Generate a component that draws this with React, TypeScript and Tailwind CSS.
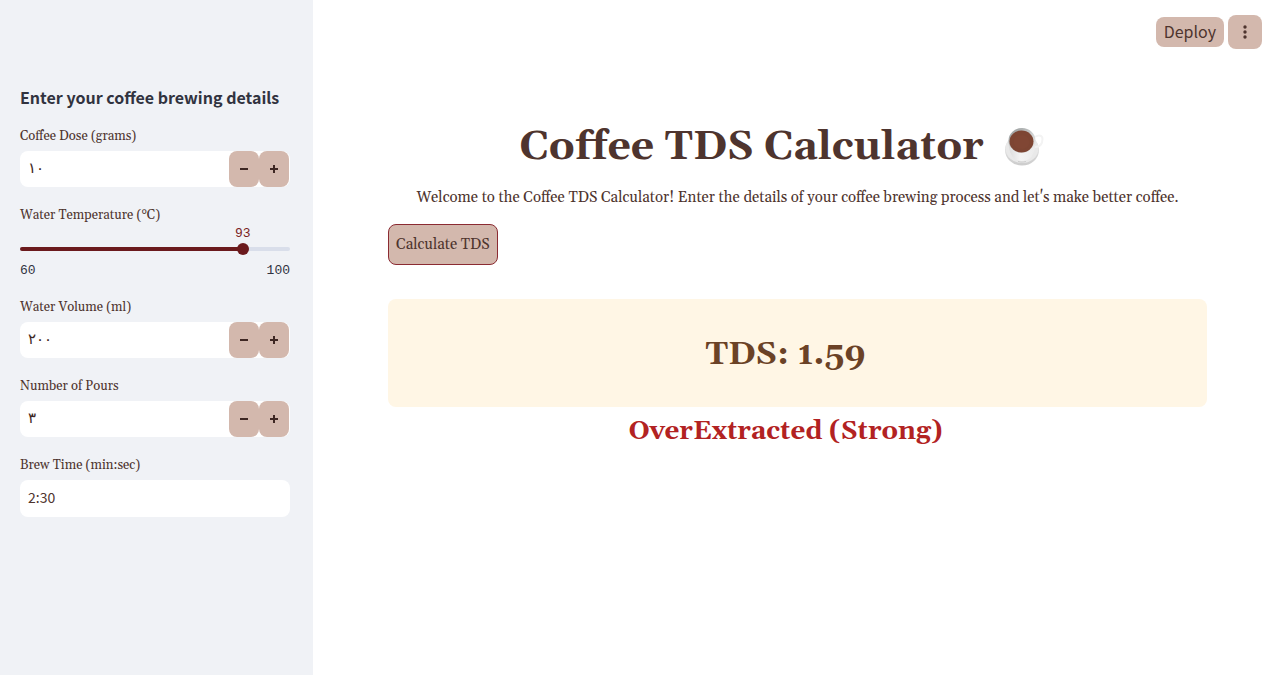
import { useState } from "react";
import type { ReactNode } from "react";

const serif = "font-[Georgia,Gelasio,'Liberation_Serif',serif]";
const sans = "font-['Source_Sans_Pro','Noto_Sans_CJK_SC','Noto_Sans',sans-serif]";
const mono = "font-['Liberation_Mono',monospace]";

function toArabic(value: number) {
  return value.toLocaleString("ar-EG", { useGrouping: false });
}

function Label({ htmlFor, children }: { htmlFor: string; children: ReactNode }) {
  return (
    <label htmlFor={htmlFor} className={`${serif} block text-[13px] leading-5 text-[#4e342e]`}>
      {children}
    </label>
  );
}

function Stepper({ id, label, initial, step }: { id: string; label: string; initial: number; step: number }) {
  const [value, setValue] = useState(initial);
  const button =
    "flex w-[30px] items-center justify-center rounded-lg bg-[#d3b8ad] text-[#3e2723]";
  return (
    <div className="flex flex-col gap-[5px]">
      <Label htmlFor={id}>{label}</Label>
      <div className="flex h-9 rounded-lg bg-white pr-px">
        <input
          id={id}
          type="text"
          inputMode="numeric"
          readOnly
          value={toArabic(value)}
          className="min-w-0 flex-1 rounded-l-lg bg-transparent px-2 pb-0.5 font-['DejaVu_Sans',sans-serif] text-[15px] text-[#3e2723] outline-none"
        />
        <button type="button" aria-label={`Decrease ${label}`} className={button} onClick={() => setValue(Math.max(0, value - step))}>
          <svg viewBox="0 0 8 8" className="size-2" fill="currentColor">
            <path d="M0 3h8v2H0z" />
          </svg>
        </button>
        <button type="button" aria-label={`Increase ${label}`} className={button} onClick={() => setValue(value + step)}>
          <svg viewBox="0 0 8 8" className="size-2" fill="currentColor">
            <path d="M3 0h2v3h3v2H5v3H3V5H0V3h3z" />
          </svg>
        </button>
      </div>
    </div>
  );
}

function TemperatureSlider() {
  const min = 60;
  const max = 100;
  const [value, setValue] = useState(93);
  const percent = ((value - min) / (max - min)) * 100;
  return (
    <div className="flex flex-col">
      <Label htmlFor="temperature">Water Temperature (°C)</Label>
      <div className={`${mono} relative h-[18px] text-[13px] leading-[18px] text-[#7b1e22]`}>
        <output htmlFor="temperature" className="absolute -translate-x-1/2" style={{ left: `${percent}%` }}>
          {value}
        </output>
      </div>
      <div className="relative flex h-3 items-center">
        <div className="h-1 w-full overflow-hidden rounded-full bg-[#d9deea]">
          <div className="h-full bg-[#6b1a1d]" style={{ width: `${percent}%` }} />
        </div>
        <input
          id="temperature"
          type="range"
          min={min}
          max={max}
          value={value}
          onChange={(e) => setValue(Number(e.target.value))}
          className="absolute inset-y-0 -left-1.5 w-[calc(100%+12px)] appearance-none bg-transparent [&::-webkit-slider-thumb]:size-3 [&::-webkit-slider-thumb]:appearance-none [&::-webkit-slider-thumb]:rounded-full [&::-webkit-slider-thumb]:bg-[#6b1a1d]"
        />
      </div>
      <div className={`${mono} flex justify-between pt-2 text-[13px] leading-4 text-[#31333f]`}>
        <span>{min}</span>
        <span>{max}</span>
      </div>
    </div>
  );
}

function CoffeeCup() {
  return (
    <svg viewBox="0 0 40 40" className="size-10" role="img" aria-label="Coffee">
      <defs>
        <linearGradient id="saucer" x1="0" y1="0" x2="0" y2="1">
          <stop offset="0" stopColor="#eeeeee" />
          <stop offset="1" stopColor="#cccccc" />
        </linearGradient>
        <linearGradient id="cup" x1="0" y1="0" x2="1" y2="0">
          <stop offset="0" stopColor="#dcdcdc" />
          <stop offset="0.45" stopColor="#f4f4f4" />
          <stop offset="1" stopColor="#ebebeb" />
        </linearGradient>
        <linearGradient id="rim" x1="0" y1="0" x2="1" y2="1">
          <stop offset="0" stopColor="#8f9494" />
          <stop offset="0.5" stopColor="#c8caca" />
          <stop offset="1" stopColor="#f4f4f4" />
        </linearGradient>
      </defs>
      <ellipse cx="18" cy="23" rx="17" ry="15.5" fill="url(#saucer)" />
      <ellipse cx="18" cy="21.500" rx="16.5" ry="14.5" fill="#e9e9e9" />
      <path d="M31 10c4-2.500 7.500-1.500 7.500 2 0 5-3 8-8 8" fill="none" stroke="#f3f3f3" strokeWidth="2" />
      <path d="M4.500 14c0 9 2.500 15 6.500 18 4 2.500 10 2.500 14 0 4-3 6.500-9 6.500-18z" fill="url(#cup)" />
      <path d="M14 34.500c3 .8 5 .8 8 0" stroke="#c4c4c4" strokeWidth="0.800" fill="none" />
      <ellipse cx="18" cy="13.500" rx="13.500" ry="12.500" fill="url(#rim)" />
      <ellipse cx="17.500" cy="14.500" rx="12" ry="11" fill="#7d4533" />
      <ellipse cx="17.500" cy="15" rx="8" ry="7" fill="#804634" />
    </svg>
  );
}

export default function App() {
  const [brewTime, setBrewTime] = useState("2:30");
  return (
    <div className="flex min-h-screen bg-white">
      <aside className="w-[313px] shrink-0 bg-[#f0f2f6] pt-[84px] pr-[23px] pl-5">
        <h2 className={`${sans} text-[16px] leading-[26px] font-bold whitespace-nowrap text-[#31333f]`}>
          Enter your coffee brewing details
        </h2>
        <form className="mt-4 flex flex-col gap-[18px]" onSubmit={(e) => e.preventDefault()}>
          <Stepper id="dose" label="Coffee Dose (grams)" initial={10} step={1} />
          <TemperatureSlider />
          <Stepper id="volume" label="Water Volume (ml)" initial={200} step={10} />
          <Stepper id="pours" label="Number of Pours" initial={3} step={1} />
          <div className="flex flex-col gap-[5px]">
            <Label htmlFor="brew-time">Brew Time (min:sec)</Label>
            <input
              id="brew-time"
              type="text"
              value={brewTime}
              onChange={(e) => setBrewTime(e.target.value)}
              className={`${sans} h-[37px] w-full rounded-lg bg-white px-2 pb-1 text-[14px] text-[#4e342e] outline-none`}
            />
          </div>
        </form>
      </aside>

      <div className="flex min-w-0 flex-1 flex-col">
        <header className="flex items-center justify-end gap-1 pt-[15px] pr-[18px]">
          <button type="button" className={`${sans} h-[30px] rounded-lg bg-[#d3b8ad] px-2 pb-0.5 text-[16px] leading-7 text-[#4e342e]`}>
            Deploy
          </button>
          <button type="button" aria-label="Main menu" className="flex size-[34px] items-center justify-center rounded-lg bg-[#d3b8ad] text-[#4e342e]">
            <svg viewBox="0 0 4 14" className="h-3.5 w-1" fill="currentColor">
              <circle cx="2" cy="2" r="1.700" />
              <circle cx="2" cy="7" r="1.700" />
              <circle cx="2" cy="12" r="1.700" />
            </svg>
          </button>
        </header>

        <main className={`${serif} pt-[71px] pr-[73px] pl-[75px] text-[#4e342e]`}>
          <h1 className="flex items-center justify-center gap-5 pr-8 text-[41px] leading-[54px] font-bold">
            Coffee TDS Calculator
            <CoffeeCup />
          </h1>
          <p className="pt-3 text-center text-[15px] leading-6">
            Welcome to the Coffee TDS Calculator! Enter the details of your coffee brewing process and let's make better coffee.
          </p>
          <button type="button" className="mt-3.5 h-[41px] rounded-lg border border-[#8b2b32] bg-[#d3b8ad] px-[7px] pt-0.5 text-[15px]">
            Calculate TDS
          </button>
          <section className="mt-[34px] rounded-lg bg-[#fff6e5] pt-[33px] pr-6 pb-[31px] text-center">
            <h2 className="text-[33px] leading-[44px] font-bold text-[#6b4226]">TDS: 1.59</h2>
          </section>
          <h3 className="pt-[7px] pr-6 text-center text-[26px] leading-9 font-bold text-[#b22222]">
            OverExtracted (Strong)
          </h3>
        </main>
      </div>
    </div>
  );
}
